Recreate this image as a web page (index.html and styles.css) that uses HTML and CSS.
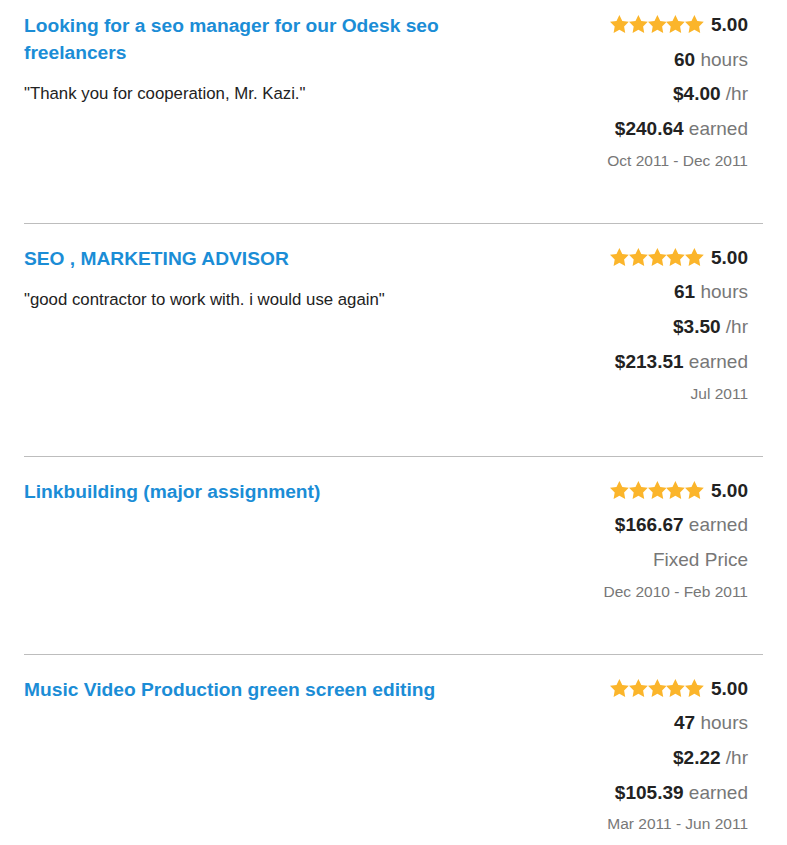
FILE: index.html
```html
<!DOCTYPE html>
<html lang="en">
<head>
    <meta charset="UTF-8">
    <meta name="viewport" content="width=device-width, initial-scale=1.0">
    <title>Work History</title>
    <link rel="stylesheet" href="styles.css">
</head>
<body>
    <!-- Job history list -->
    <div class="history">
        <article class="job">
            <div class="job-info">
                <h2 class="job-title">Looking for a seo manager for our Odesk seo freelancers</h2>
                <p class="job-feedback">"Thank you for cooperation, Mr. Kazi."</p>
            </div>
            <div class="job-stats">
                <div class="stat rating">
                    <span class="stars">
                        <svg viewBox="2 2 20 20"><path d="M12 2l3.09 6.26L22 9.27l-5 4.87 1.18 6.88L12 17.770l-6.18 3.25L7 14.14 2 9.27l6.91-1.01z"/></svg>
                        <svg viewBox="2 2 20 20"><path d="M12 2l3.09 6.26L22 9.27l-5 4.87 1.18 6.88L12 17.77l-6.18 3.25L7 14.14 2 9.27l6.91-1.01z"/></svg>
                        <svg viewBox="2 2 20 20"><path d="M12 2l3.09 6.26L22 9.27l-5 4.87 1.18 6.88L12 17.77l-6.18 3.25L7 14.14 2 9.27l6.91-1.01z"/></svg>
                        <svg viewBox="2 2 20 20"><path d="M12 2l3.09 6.26L22 9.27l-5 4.87 1.18 6.88L12 17.77l-6.18 3.25L7 14.14 2 9.27l6.91-1.01z"/></svg>
                        <svg viewBox="2 2 20 20"><path d="M12 2l3.09 6.26L22 9.27l-5 4.87 1.18 6.88L12 17.77l-6.18 3.25L7 14.14 2 9.27l6.91-1.01z"/></svg>
                    </span>
                    <b>5.00</b>
                </div>
                <div class="stat"><b>60</b> hours</div>
                <div class="stat"><b>$4.00</b> /hr</div>
                <div class="stat"><b>$240.64</b> earned</div>
                <div class="stat date">Oct 2011 - Dec 2011</div>
            </div>
        </article>

        <article class="job">
            <div class="job-info">
                <h2 class="job-title">SEO , MARKETING ADVISOR</h2>
                <p class="job-feedback">"good contractor to work with. i would use again"</p>
            </div>
            <div class="job-stats">
                <div class="stat rating">
                    <span class="stars">
                        <svg viewBox="2 2 20 20"><path d="M12 2l3.09 6.26L22 9.27l-5 4.87 1.18 6.88L12 17.77l-6.18 3.25L7 14.14 2 9.27l6.91-1.01z"/></svg>
                        <svg viewBox="2 2 20 20"><path d="M12 2l3.09 6.26L22 9.27l-5 4.87 1.18 6.88L12 17.77l-6.18 3.25L7 14.14 2 9.27l6.91-1.01z"/></svg>
                        <svg viewBox="2 2 20 20"><path d="M12 2l3.09 6.26L22 9.27l-5 4.87 1.18 6.88L12 17.77l-6.18 3.25L7 14.14 2 9.27l6.91-1.01z"/></svg>
                        <svg viewBox="2 2 20 20"><path d="M12 2l3.09 6.26L22 9.27l-5 4.87 1.18 6.88L12 17.77l-6.18 3.25L7 14.14 2 9.27l6.91-1.01z"/></svg>
                        <svg viewBox="2 2 20 20"><path d="M12 2l3.09 6.26L22 9.27l-5 4.87 1.18 6.88L12 17.77l-6.18 3.25L7 14.14 2 9.27l6.91-1.01z"/></svg>
                    </span>
                    <b>5.00</b>
                </div>
                <div class="stat"><b>61</b> hours</div>
                <div class="stat"><b>$3.50</b> /hr</div>
                <div class="stat"><b>$213.51</b> earned</div>
                <div class="stat date">Jul 2011</div>
            </div>
        </article>

        <article class="job">
            <div class="job-info">
                <h2 class="job-title">Linkbuilding (major assignment)</h2>
            </div>
            <div class="job-stats">
                <div class="stat rating">
                    <span class="stars">
                        <svg viewBox="2 2 20 20"><path d="M12 2l3.09 6.26L22 9.27l-5 4.87 1.18 6.88L12 17.77l-6.18 3.25L7 14.14 2 9.27l6.91-1.01z"/></svg>
                        <svg viewBox="2 2 20 20"><path d="M12 2l3.09 6.26L22 9.27l-5 4.87 1.18 6.88L12 17.77l-6.18 3.25L7 14.14 2 9.27l6.91-1.01z"/></svg>
                        <svg viewBox="2 2 20 20"><path d="M12 2l3.09 6.26L22 9.27l-5 4.87 1.18 6.88L12 17.77l-6.18 3.25L7 14.14 2 9.27l6.91-1.01z"/></svg>
                        <svg viewBox="2 2 20 20"><path d="M12 2l3.09 6.26L22 9.27l-5 4.87 1.18 6.88L12 17.77l-6.18 3.25L7 14.14 2 9.27l6.91-1.01z"/></svg>
                        <svg viewBox="2 2 20 20"><path d="M12 2l3.09 6.26L22 9.27l-5 4.87 1.18 6.88L12 17.77l-6.18 3.25L7 14.14 2 9.27l6.91-1.01z"/></svg>
                    </span>
                    <b>5.00</b>
                </div>
                <div class="stat"><b>$166.67</b> earned</div>
                <div class="stat">Fixed Price</div>
                <div class="stat date">Dec 2010 - Feb 2011</div>
            </div>
        </article>

        <article class="job">
            <div class="job-info">
                <h2 class="job-title">Music Video Production green screen editing</h2>
            </div>
            <div class="job-stats">
                <div class="stat rating">
                    <span class="stars">
                        <svg viewBox="2 2 20 20"><path d="M12 2l3.09 6.26L22 9.27l-5 4.87 1.18 6.88L12 17.77l-6.18 3.25L7 14.14 2 9.27l6.91-1.01z"/></svg>
                        <svg viewBox="2 2 20 20"><path d="M12 2l3.09 6.26L22 9.27l-5 4.87 1.18 6.88L12 17.77l-6.18 3.25L7 14.14 2 9.27l6.91-1.01z"/></svg>
                        <svg viewBox="2 2 20 20"><path d="M12 2l3.09 6.26L22 9.27l-5 4.87 1.18 6.88L12 17.77l-6.18 3.25L7 14.14 2 9.27l6.91-1.01z"/></svg>
                        <svg viewBox="2 2 20 20"><path d="M12 2l3.09 6.26L22 9.27l-5 4.87 1.18 6.88L12 17.77l-6.18 3.25L7 14.14 2 9.27l6.91-1.01z"/></svg>
                        <svg viewBox="2 2 20 20"><path d="M12 2l3.09 6.26L22 9.27l-5 4.87 1.18 6.88L12 17.77l-6.18 3.25L7 14.14 2 9.27l6.91-1.01z"/></svg>
                    </span>
                    <b>5.00</b>
                </div>
                <div class="stat"><b>47</b> hours</div>
                <div class="stat"><b>$2.22</b> /hr</div>
                <div class="stat"><b>$105.39</b> earned</div>
                <div class="stat date">Mar 2011 - Jun 2011</div>
            </div>
        </article>
    </div>
</body>
</html>
```

FILE: styles.css
```css
body {
    margin: 0;
    padding: 0 24px;
    background: #fff;
    color: #222;
    font-family: 'Liberation Sans', Arial, sans-serif;
}

.history {
    max-width: 739px;
}

/* One job row */
.job {
    display: flex;
    justify-content: space-between;
    padding: 20px 15px 52px 0;
    border-bottom: 1px solid #bdbdbd;
}

.job:first-child {
    padding-top: 11px;
}

.job:last-child {
    border-bottom: none;
}

.job-info {
    width: 445px;
    padding-top: 2px;
}

.job-title {
    margin: 0 0 16px;
    font-size: 19.2px;
    line-height: 26.5px;
    font-weight: bold;
    color: #1b8dd6;
}

.job-feedback {
    margin: 0;
    font-size: 16.8px;
    line-height: 24px;
    color: #222;
}

/* Stats on the right */
.job-stats {
    display: flex;
    flex-direction: column;
    align-items: flex-end;
    gap: 7.7px;
}

.stat {
    font-size: 19px;
    line-height: 27px;
    color: #777;
    white-space: nowrap;
}

.stat b {
    color: #222;
}

.rating {
    display: flex;
    align-items: center;
    gap: 7px;
}

.stars {
    display: flex;
}

.stars svg {
    width: 18.8px;
    height: 18.8px;
    fill: #fbb52b;
}

.date {
    font-size: 15.5px;
    line-height: 21px;
    color: #777;
}
```
